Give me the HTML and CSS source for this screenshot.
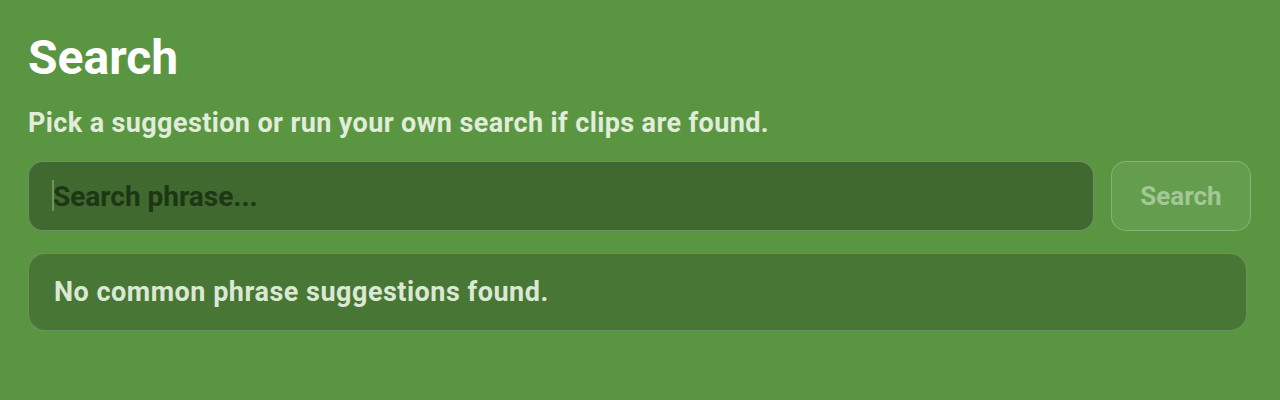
FILE: index.html
```html
<!DOCTYPE html>
<html lang="en">
<head>
<meta charset="utf-8">
<title>Search</title>
<link rel="stylesheet" href="styles.css">
</head>
<body>
<main class="panel">
  <h1 class="title">Search</h1>
  <p class="subtitle">Pick a suggestion or run your own search if clips are found.</p>
  <div class="search-row">
    <div class="input-wrap">
      <span class="caret"></span>
      <input class="search-input" type="text" placeholder="Search phrase...">
    </div>
    <button class="search-btn" disabled>Search</button>
  </div>
  <div class="suggestions">No common phrase suggestions found.</div>
</main>
</body>
</html>
```

FILE: styles.css
```css
html, body {
  margin: 0;
  padding: 0;
  background: #5a9642;
  height: 100%;
}
body {
  font-family: Roboto, "Liberation Sans", sans-serif;
}
.panel {
  padding: 28px 29px 0 28px;
}
.title {
  margin: 0;
  font-size: 48px;
  line-height: 60px;
  font-weight: 700;
  color: #ffffff;
}
.subtitle {
  margin: 20px 0 0;
  font-size: 27px;
  line-height: 30px;
  font-weight: 700;
  letter-spacing: 0.38px;
  color: #e1ecdb;
}
.search-row {
  display: flex;
  gap: 17px;
  margin-top: 23px;
}
.input-wrap {
  position: relative;
  flex: 1;
}
.search-input {
  box-sizing: border-box;
  width: 100%;
  height: 70px;
  padding: 0 22px 0 24px;
  border: 1px solid rgba(255,255,255,0.25);
  border-radius: 15px;
  background: #3f692f;
  font-family: Roboto, "Liberation Sans", sans-serif;
  font-size: 28px;
  font-weight: 700;
  color: #1d3614;
  outline: none;
}
.search-input::placeholder {
  color: #1d3614;
  opacity: 1;
}
.caret {
  position: absolute;
  left: 24px;
  top: 19px;
  width: 2px;
  height: 31px;
  background: #6a9659;
}
.search-btn {
  box-sizing: border-box;
  width: 140px;
  height: 70px;
  border: 1px solid rgba(255,255,255,0.22);
  border-radius: 15px;
  background: #659d4f;
  font-family: Roboto, "Liberation Sans", sans-serif;
  font-size: 26px;
  font-weight: 700;
  color: #a2c995;
  padding: 0;
}
.suggestions {
  box-sizing: border-box;
  margin: 22px 4px 0 0;
  height: 78px;
  padding: 0 25px;
  display: flex;
  align-items: center;
  border: 1px solid rgba(255,255,255,0.2);
  border-radius: 17px;
  background: #487634;
  font-size: 27px;
  font-weight: 700;
  letter-spacing: 0.5px;
  color: #dbe8d4;
}
```
